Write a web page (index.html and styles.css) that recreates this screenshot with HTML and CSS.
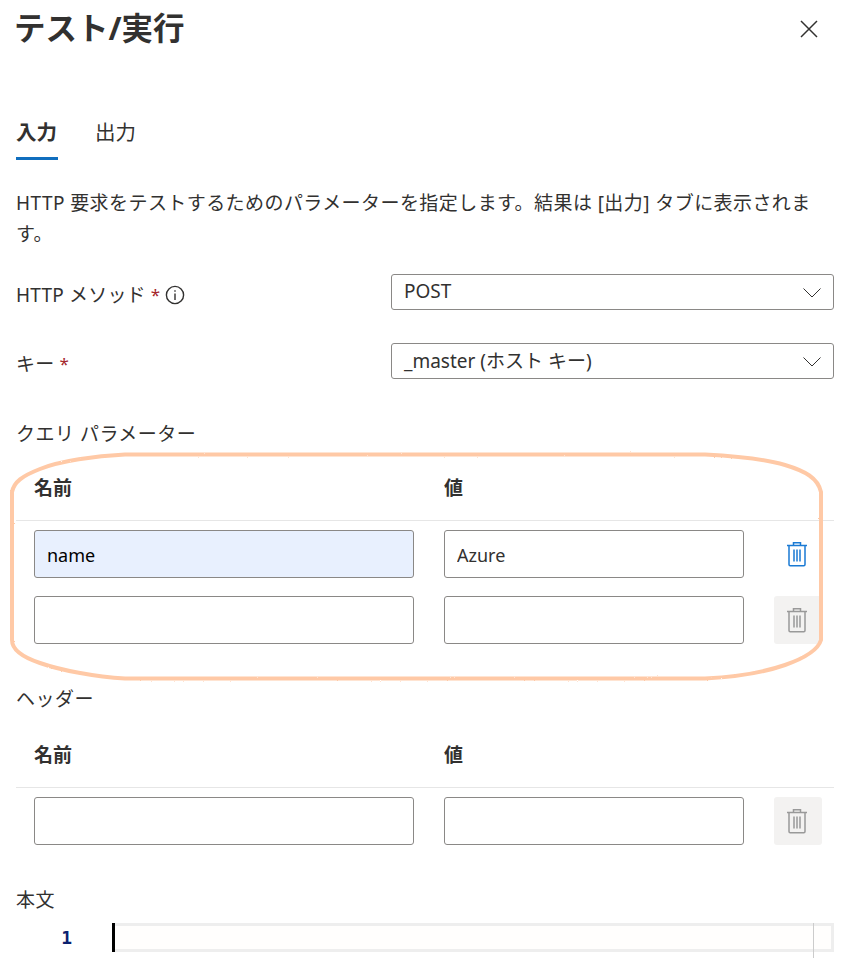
FILE: index.html
```html
<!DOCTYPE html>
<html lang="ja">
<head>
    <meta charset="UTF-8">
    <meta name="viewport" content="width=device-width, initial-scale=1.0">
    <title>テスト/実行</title>
    <link rel="stylesheet" href="styles.css">
</head>
<body>
    <div class="panel">
        <div class="panel-header">
            <h1 class="panel-title">テスト/実行</h1>
            <svg class="close-icon" width="18" height="18" viewBox="0 0 18 18"><path d="M1 1 L17 17 M17 1 L1 17"/></svg>
        </div>

        <div class="tabs">
            <div class="tab active">入力</div>
            <div class="tab">出力</div>
        </div>

        <p class="description">HTTP 要求をテストするためのパラメーターを指定します。結果は [出力] タブに表示されます。</p>

        <div class="form-row">
            <div class="form-label">
                HTTP メソッド <span class="required">*</span>
                <svg class="info-icon" width="20" height="20" viewBox="0 0 20 20"><circle cx="10" cy="10" r="8.6"/><path d="M10 8.6 V15 M10 5.2 V6.8"/></svg>
            </div>
            <div class="select">
                <span>POST</span>
                <svg class="chevron" width="18" height="10" viewBox="0 0 18 10"><path d="M0.5 0.5 L9 9 L17.5 0.5"/></svg>
            </div>
        </div>

        <div class="form-row">
            <div class="form-label">キー <span class="required">*</span></div>
            <div class="select">
                <span>_master (ホスト キー)</span>
                <svg class="chevron" width="18" height="10" viewBox="0 0 18 10"><path d="M0.5 0.5 L9 9 L17.5 0.5"/></svg>
            </div>
        </div>

        <div class="section-label query-label">クエリ パラメーター</div>
        <div class="param-table">
            <div class="param-row param-head">
                <div>名前</div>
                <div>値</div>
            </div>
            <div class="param-body">
                <div class="param-row">
                    <input class="text-input autofilled" type="text" value="name">
                    <input class="text-input" type="text" value="Azure">
                    <button class="icon-btn">
                        <svg class="trash" width="22" height="26" viewBox="0 0 22 26"><path d="M1 4.5 H21 M7.5 4.5 V1.7 H14.5 V4.5 M3 4.5 V23.5 Q3 24.7 4.2 24.7 H17.8 Q19 24.7 19 23.5 V4.5 M8 8.5 V20.5 M11 8.5 V20.5 M14 8.5 V20.5"/></svg>
                    </button>
                </div>
                <div class="param-row">
                    <input class="text-input" type="text">
                    <input class="text-input" type="text">
                    <button class="icon-btn disabled">
                        <svg class="trash" width="22" height="26" viewBox="0 0 22 26"><path d="M1 4.5 H21 M7.5 4.5 V1.7 H14.5 V4.5 M3 4.5 V23.5 Q3 24.7 4.2 24.7 H17.8 Q19 24.7 19 23.5 V4.5 M8 8.5 V20.5 M11 8.5 V20.5 M14 8.5 V20.5"/></svg>
                    </button>
                </div>
            </div>
        </div>

        <div class="section-label header-label">ヘッダー</div>
        <div class="param-table">
            <div class="param-row param-head">
                <div>名前</div>
                <div>値</div>
            </div>
            <div class="param-body">
                <div class="param-row">
                    <input class="text-input" type="text">
                    <input class="text-input" type="text">
                    <button class="icon-btn disabled">
                        <svg class="trash" width="22" height="26" viewBox="0 0 22 26"><path d="M1 4.5 H21 M7.5 4.5 V1.7 H14.5 V4.5 M3 4.5 V23.5 Q3 24.7 4.2 24.7 H17.8 Q19 24.7 19 23.5 V4.5 M8 8.5 V20.5 M11 8.5 V20.5 M14 8.5 V20.5"/></svg>
                    </button>
                </div>
            </div>
        </div>

        <div class="section-label body-label">本文</div>
        <div class="editor">
            <div class="line-number">1</div>
            <div class="cursor"></div>
            <div class="editor-line"></div>
            <div class="editor-ruler"></div>
        </div>

        <!-- hand drawn highlight round the query table -->
        <svg class="highlight" width="856" height="958" viewBox="0 0 856 958">
            <filter id="crayon"><feTurbulence type="fractalNoise" baseFrequency="1.3" numOctaves="1" seed="3"/><feDisplacementMap in="SourceGraphic" scale="2"/></filter>
            <path filter="url(#crayon)" d="M125 454.5 H705 C735 456 765 459 785 465 C805 471 818 478 821 492 V640 C818 650 805 658 785 665 C765 672 735 677 705 678.5 H125 C95 677 60 670 40 663 C22 657 12 650 12 640 V492 C14 482 22 476 40 469 C60 461 95 456 125 454.5 Z"/>
        </svg>
    </div>
</body>
</html>
```

FILE: styles.css
```css
:root {
    --text-color: #323130;
    --border-color: #8a8886;
    --line-color: #e6e6e6;
    --accent-color: #106ebe;
    --disabled-bg: #f3f2f1;
    --disabled-color: #999999;
}

* {
    margin: 0;
    padding: 0;
    box-sizing: border-box;
}

html, body {
    height: 958px;
    overflow: hidden;
    background: #fff;
}

body {
    font-family: "Noto Sans", "Noto Sans CJK JP", sans-serif;
    color: var(--text-color);
    font-size: 18px;
}

.panel {
    position: relative;
    height: 958px;
    padding: 0 22px 0 16px;
}

.panel-header {
    display: flex;
    justify-content: space-between;
    align-items: center;
    height: 58px;
}

.panel-title {
    margin: -3px 0 0 -2px;
    font-size: 31.5px;
    font-weight: 700;
    line-height: 58px;
}

.close-icon {
    margin-right: 16px;
    fill: none;
    stroke: #323130;
    stroke-width: 1.5;
}

.tabs {
    display: flex;
    gap: 37px;
    margin-top: 49px;
}

.tab {
    height: 53px;
    padding-top: 2px;
    line-height: 46px;
    font-size: 20.5px;
    border-bottom: 3px solid transparent;
}

.tab.active {
    min-width: 42px;
    font-weight: 700;
    border-bottom-color: var(--accent-color);
}

.description {
    margin-top: 28px;
    font-size: 19px;
    letter-spacing: 0.43px;
    line-height: 31px;
    height: 62px;
}

.form-row {
    display: grid;
    grid-template-columns: 375px 443px;
    align-items: center;
    margin-top: 24px;
    height: 36px;
}

.form-row + .form-row {
    margin-top: 33px;
}

.form-label {
    display: flex;
    align-items: center;
    gap: 5px;
    padding-top: 6px;
    font-size: 19px;
    letter-spacing: 0.2px;
    line-height: 28px;
}

.required {
    color: #a4262c;
    font-size: 17px;
}

.info-icon {
    fill: none;
    stroke: #323130;
    stroke-width: 1.4;
}

.select {
    display: flex;
    justify-content: space-between;
    align-items: center;
    height: 36px;
    padding: 0 12px 2px 12px;
    border: 1px solid var(--border-color);
    border-radius: 3px;
    font-size: 19px;
}

.chevron {
    fill: none;
    stroke: #323130;
    stroke-width: 1;
    margin-top: 4px;
}

.section-label {
    font-size: 19px;
    letter-spacing: 0.5px;
    line-height: 28px;
}

.query-label {
    margin-top: 41px;
    margin-bottom: -2px;
}

.header-label {
    margin-top: 41px;
}

.body-label {
    margin-top: 41px;
}

.param-row {
    display: grid;
    grid-template-columns: 380px 300px 48px;
    column-gap: 30px;
    padding: 0 12px 0 18px;
}

.param-head {
    padding-top: 28px;
    padding-bottom: 18px;
    border-bottom: 1px solid var(--line-color);
    font-size: 19px;
    font-weight: 700;
    line-height: 28px;
}

.param-body {
    display: flex;
    flex-direction: column;
    gap: 18px;
    padding-top: 9px;
}

.text-input {
    width: 100%;
    height: 48px;
    padding: 2px 12px 0;
    border: 1px solid var(--border-color);
    border-radius: 3px;
    font-family: inherit;
    font-size: 18px;
    color: var(--text-color);
    background: #fff;
    outline: none;
}

.text-input.autofilled {
    background: #e8f0fe;
    color: #000;
}

.icon-btn {
    display: flex;
    align-items: center;
    justify-content: center;
    width: 48px;
    height: 48px;
    padding-right: 2px;
    border: none;
    border-radius: 3px;
    background: none;
    color: #1a7ad4;
}

.icon-btn.disabled {
    background: var(--disabled-bg);
    color: var(--disabled-color);
}

.trash {
    fill: none;
    stroke: currentColor;
    stroke-width: 1.5;
}

.editor {
    position: relative;
    display: flex;
    height: 29px;
    margin-top: 9px;
}

.line-number {
    width: 96px;
    padding-right: 40px;
    text-align: right;
    font-family: "DejaVu Sans Mono", monospace;
    font-size: 18px;
    font-weight: 700;
    line-height: 29px;
    color: #0b216f;
}

.cursor {
    width: 3px;
    background: #000;
}

.editor-line {
    flex: 1;
    border: 3px solid #eeeeee;
    border-left: none;
    background: #fffefd;
}

.editor-ruler {
    position: absolute;
    top: 0;
    left: 797px;
    width: 1px;
    height: 35px;
    background: #cccccc;
}

.highlight {
    position: absolute;
    top: 0;
    left: 0;
    fill: none;
    stroke: #ffc9a6;
    stroke-width: 4;
    stroke-linejoin: round;
    pointer-events: none;
}
```
